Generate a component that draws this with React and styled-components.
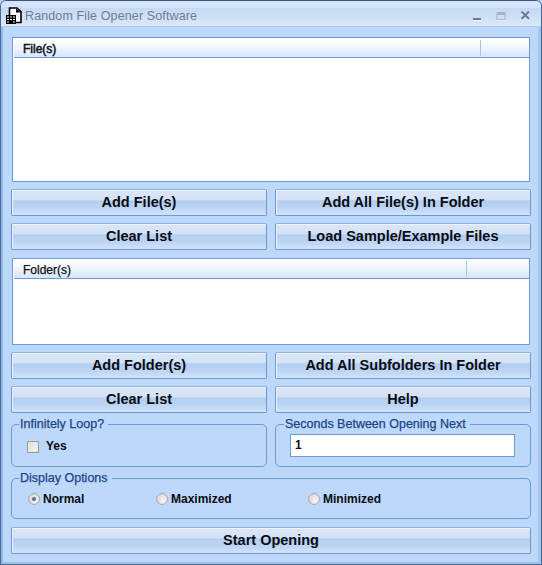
import React from "react";
import styled, { createGlobalStyle } from "styled-components";

const GlobalStyle = createGlobalStyle`
  html, body {
    margin: 0;
    padding: 0;
    background: #bcd9fb;
    font-family: "Liberation Sans", Arial, sans-serif;
  }
`;

const Window = styled.div`
  box-sizing: border-box;
  width: 542px;
  height: 565px;
  display: flex;
  flex-direction: column;
  overflow: hidden;
  background: #bcd9fb;
  border: 1px solid #46699b;
  border-top-color: #34568a;
  border-radius: 6px 6px 0 0;
`;

const TitleBar = styled.div`
  box-sizing: border-box;
  height: 26px;
  flex: none;
  display: flex;
  align-items: center;
  padding: 4px 10px 0 4px;
  background: linear-gradient(#d6e4f7 0, #d6e4f7 6px, #c5d9f4 7px, #dae8f9 25px);
  border-bottom: 1px solid #a9cdf3;
`;

const AppIcon = styled.svg`
  width: 18px;
  height: 18px;
  margin-right: 2px;
`;

const Title = styled.span`
  flex: 1;
  font-size: 12.5px;
  letter-spacing: 0.12px;
  color: #6f7b90;
`;

const WinControls = styled.div`
  display: flex;
  align-items: center;
  gap: 13px;
`;

const Client = styled.div`
  flex: 1;
  display: flex;
  flex-direction: column;
  box-sizing: border-box;
  padding: 10px 6px 0 8px;
  background: #bcd9fb;
  border-left: 2px solid #93b8e6;
  border-right: 3px solid #a8c6ea;
  border-bottom: 2px solid #a3bfe0;
`;

const ListBox = styled.div`
  box-sizing: border-box;
  height: ${(p) => p.$height}px;
  margin: 0 0 7px 1px;
  width: 518px;
  flex: none;
  background: #fff;
  border: 1px solid #6d9ad6;
`;

const ListHeader = styled.div`
  box-sizing: border-box;
  height: 20px;
  display: flex;
  align-items: center;
  margin-left: 1px;
  background: linear-gradient(#ffffff, #f3f8fe 40%, #d6e6fb);
  border-bottom: 1px solid #6d9ad6;
`;

const HeaderCell = styled.div`
  box-sizing: border-box;
  height: 16px;
  padding-left: 9px;
  line-height: 18px;
  font-size: 12px;
  color: #111;
  -webkit-text-stroke: ${(p) => p.$stroke ?? 0.25}px #111;
  border-right: ${(p) => (p.$last ? "0" : "1px solid #9cc6f5")};
  flex: ${(p) => (p.$last ? 1 : "none")};
  width: ${(p) => (p.$last ? "auto" : `${p.$width}px`)};
`;

const ButtonRow = styled.div`
  display: grid;
  grid-template-columns: 256px 256px;
  gap: 8px;
  margin-bottom: ${(p) => p.$gap ?? 7}px;
`;

const Button = styled.button`
  box-sizing: border-box;
  height: 27px;
  width: 100%;
  padding: 0 0 1px;
  font-family: inherit;
  font-size: 14.5px;
  font-weight: bold;
  color: #0b0b12;
  border: 1px solid #7097cf;
  border-top-color: #8fb1e0;
  border-radius: 2px;
  background: linear-gradient(
    #dbe7f8 0,
    #d3e2f6 38%,
    #b3cef0 44%,
    #bbd4f3 70%,
    #d0e3fa 100%
  );
  box-shadow: inset 1px 1px 0 #edf4fd;
`;

const GroupRow = styled.div`
  display: grid;
  grid-template-columns: 256px 256px;
  gap: 8px;
`;

const Group = styled.fieldset`
  box-sizing: border-box;
  height: ${(p) => p.$height}px;
  margin: ${(p) => p.$top ?? 0}px 0 0;
  width: 520px;
  min-width: 0;
  padding: 0 8px;
  border: 1px solid #6d9ad6;
  border-radius: 5px;
  ${GroupRow} & {
    width: auto;
  }
`;

const Legend = styled.legend`
  padding: 0 4px 0 1px;
  margin-left: ${(p) => p.$indent ?? -1}px;
  font-size: 12.5px;
  line-height: 15px;
  color: #1c4484;
  -webkit-text-stroke: 0.25px #1c4484;
`;

const OptionLabel = styled.label`
  display: flex;
  align-items: center;
  font-size: 12px;
  font-weight: bold;
  color: #0b0b12;
`;

const CheckRow = styled(OptionLabel)`
  padding: 7px 0 0 7px;
  gap: 7px;
`;

const CheckBox = styled.span`
  box-sizing: border-box;
  width: 12px;
  height: 12px;
  margin-top: 2px;
  border: 1px solid #9a9a9a;
  background: linear-gradient(135deg, #dcdcdc, #f7f7f7);
  box-shadow: inset 0 0 0 1px #e8e8e8;
`;

const NumberField = styled.div`
  box-sizing: border-box;
  height: 23px;
  width: 225px;
  margin: 2px 0 0 6px;
  padding-left: 4px;
  line-height: 21px;
  background: #fff;
  border: 1px solid #6d9ad6;
  font-size: 12px;
  font-weight: bold;
  color: #111;
`;

const RadioRow = styled.div`
  display: grid;
  grid-template-columns: 128px 152px 1fr;
  padding: 6px 0 0 8px;
`;

const RadioLabel = styled(OptionLabel)`
  gap: 3px;
`;

const Radio = styled.span`
  box-sizing: border-box;
  width: 12px;
  height: 12px;
  border-radius: 50%;
  display: flex;
  align-items: center;
  justify-content: center;
  border: 1px solid #a8a8a8;
  background: radial-gradient(circle at 65% 65%, #f6f6f6, #cfcfcf);
  &::after {
    content: "";
    width: 4px;
    height: 4px;
    border-radius: 50%;
    background: ${(p) => (p.$checked ? "#5a6f8c" : "transparent")};
  }
`;

const StartWrap = styled.div`
  width: 520px;
  margin-top: 8px;
`;

const Minimize = () => (
  <svg width="11" height="11" viewBox="0 0 11 11">
    <rect x="1" y="8" width="8" height="2" fill="#6b7a92" />
    <rect x="1" y="10" width="8" height="1" fill="#f0f6fd" />
  </svg>
);

const Maximize = () => (
  <svg width="11" height="11" viewBox="0 0 11 11">
    <rect x="1" y="2.5" width="8" height="7" fill="none" stroke="#a9b3c2" />
    <rect x="1" y="3" width="8" height="2" fill="#a9b3c2" />
    <rect x="1" y="10" width="9" height="1" fill="#f0f6fd" />
  </svg>
);

const Close = () => (
  <svg width="11" height="11" viewBox="0 0 11 11">
    <path d="M1.5 1.5 L9 9 M9 1.5 L1.5 9" stroke="#f0f6fd" strokeWidth="2.2" transform="translate(0 1)" />
    <path d="M1.5 1.5 L9 9 M9 1.5 L1.5 9" stroke="#6b7e9c" strokeWidth="2.2" />
  </svg>
);

const FileIcon = () => (
  <AppIcon viewBox="0 0 18 18">
    <path d="M4.5 1 H12 L16 4.5 V15.5 H4.5 Z" fill="#fff" stroke="#000" strokeWidth="1.6" />
    <path d="M11 1 V5.5 H16" fill="#000" />
    <rect x="1" y="8" width="10" height="9" fill="#000" />
    <path d="M2 10 H4 M5 10 H7 M8 10 H10 M2 12.5 H4 M5 12.5 H7 M8 12.5 H10 M2 15 H4 M8 15 H10" stroke="#fff" strokeWidth="1" />
  </AppIcon>
);

export default function App() {
  return (
    <>
      <GlobalStyle />
      <Window>
        <TitleBar>
          <FileIcon />
          <Title>Random File Opener Software</Title>
          <WinControls>
            <Minimize />
            <Maximize />
            <Close />
          </WinControls>
        </TitleBar>
        <Client>
          <ListBox $height={145}>
            <ListHeader>
              <HeaderCell $width={467} $stroke={0.5}>File(s)</HeaderCell>
              <HeaderCell $last />
            </ListHeader>
          </ListBox>
          <ButtonRow>
            <Button>Add File(s)</Button>
            <Button>Add All File(s) In Folder</Button>
          </ButtonRow>
          <ButtonRow $gap={8}>
            <Button>Clear List</Button>
            <Button>Load Sample/Example Files</Button>
          </ButtonRow>
          <ListBox $height={87}>
            <ListHeader>
              <HeaderCell $width={453}>Folder(s)</HeaderCell>
              <HeaderCell $last />
            </ListHeader>
          </ListBox>
          <ButtonRow>
            <Button>Add Folder(s)</Button>
            <Button>Add All Subfolders In Folder</Button>
          </ButtonRow>
          <ButtonRow $gap={4}>
            <Button>Clear List</Button>
            <Button>Help</Button>
          </ButtonRow>
          <GroupRow>
            <Group $height={50}>
              <Legend>Infinitely Loop?</Legend>
              <CheckRow>
                <CheckBox />
                Yes
              </CheckRow>
            </Group>
            <Group $height={50}>
              <Legend $indent={0}>Seconds Between Opening Next</Legend>
              <NumberField>1</NumberField>
            </Group>
          </GroupRow>
          <Group $height={48} $top={4}>
            <Legend>Display Options</Legend>
            <RadioRow>
              <RadioLabel>
                <Radio $checked />
                Normal
              </RadioLabel>
              <RadioLabel>
                <Radio />
                Maximized
              </RadioLabel>
              <RadioLabel>
                <Radio />
                Minimized
              </RadioLabel>
            </RadioRow>
          </Group>
          <StartWrap>
            <Button>Start Opening</Button>
          </StartWrap>
        </Client>
      </Window>
    </>
  );
}
